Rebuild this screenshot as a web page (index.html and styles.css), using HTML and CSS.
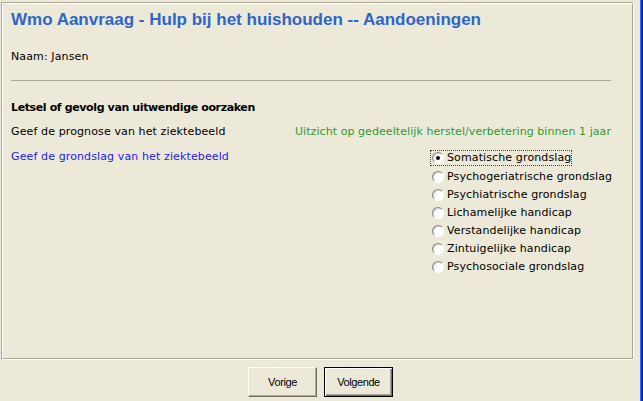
FILE: index.html
```html
<!DOCTYPE html>
<html lang="nl">
<head>
<meta charset="utf-8">
<title>Wmo Aanvraag</title>
<link rel="stylesheet" href="styles.css">
</head>
<body>
<div class="window">
  <div class="main">
    <div class="panel">
      <div class="panel-inner">
        <h1 class="title">Wmo Aanvraag - Hulp bij het huishouden -- Aandoeningen</h1>
        <div class="name">Naam: Jansen</div>
        <div class="rule"></div>
        <div class="section">Letsel of gevolg van uitwendige oorzaken</div>
        <div class="row">
          <span class="label">Geef de prognose van het ziektebeeld</span>
          <span class="answer">Uitzicht op gedeeltelijk herstel/verbetering binnen 1 jaar</span>
        </div>
        <div class="row row-radio">
          <span class="label label-active">Geef de grondslag van het ziektebeeld</span>
          <div class="radios">
            <label class="radio focused"><span class="dot checked"></span><span class="rtext">Somatische grondslag</span></label>
            <label class="radio"><span class="dot"></span><span class="rtext">Psychogeriatrische grondslag</span></label>
            <label class="radio"><span class="dot"></span><span class="rtext">Psychiatrische grondslag</span></label>
            <label class="radio"><span class="dot"></span><span class="rtext">Lichamelijke handicap</span></label>
            <label class="radio"><span class="dot"></span><span class="rtext">Verstandelijke handicap</span></label>
            <label class="radio"><span class="dot"></span><span class="rtext">Zintuigelijke handicap</span></label>
            <label class="radio"><span class="dot"></span><span class="rtext">Psychosociale grondslag</span></label>
          </div>
        </div>
      </div>
    </div>
    <div class="buttons">
      <button class="btn">Vorige</button>
      <button class="btn btn-default">Volgende</button>
    </div>
  </div>
  <div class="edge"></div>
</div>
</body>
</html>
```
FILE: styles.css
```css
html, body {
  margin: 0;
  padding: 0;
}
body {
  width: 643px;
  height: 401px;
  overflow: hidden;
  background: #ECE9D8;
  font-family: "DejaVu Sans", Verdana, sans-serif;
  font-size: 11px;
  letter-spacing: 0.12px;
  color: #000;
}
.window {
  display: flex;
  width: 643px;
  height: 401px;
}
.main {
  width: 640px;
  display: flex;
  flex-direction: column;
}
.edge {
  width: 3px;
  height: 401px;
  background: linear-gradient(to right, #3d6fe6 0, #3d6fe6 1px, #0b2fd0 1px, #0a22b8 3px);
}
.panel {
  margin: 2px 0 0 1px;
  width: 631px;
  height: 356px;
  border-top: 1px solid #ACA899;
  border-left: 1px solid #ACA899;
  border-bottom: 1px solid #fff;
  border-right: 1px solid #fff;
}
.panel-inner {
  box-sizing: border-box;
  height: 100%;
  border-top: 1px solid #fff;
  border-left: 1px solid #fff;
  border-bottom: 1px solid #ACA899;
  border-right: 1px solid #ACA899;
  padding: 5px 0 0 8px;
}
.title {
  margin: 0;
  font-family: "Liberation Sans", Arial, sans-serif;
  font-weight: bold;
  font-size: 17px;
  letter-spacing: 0;
  line-height: 22px;
  color: #2d66c8;
}
.name {
  margin-top: 19px;
  line-height: 14px;
}
.rule {
  margin-top: 16px;
  width: 600px;
  height: 1px;
  background: #ACA899;
}
.section {
  margin-top: 20px;
  font-weight: bold;
  letter-spacing: -0.38px;
  line-height: 14px;
}
.row {
  display: flex;
  justify-content: space-between;
  width: 600px;
  margin-top: 10px;
  line-height: 14px;
}
.label {
  white-space: nowrap;
}
.answer {
  color: #2e9a2e;
  letter-spacing: 0.07px;
  white-space: nowrap;
}
.row-radio {
  margin-top: 11px;
  justify-content: flex-start;
}
.row-radio .label {
  flex: 0 0 419px;
}
.label-active {
  color: #1c1cf0;
}
.radios {
  margin-top: 0;
  display: flex;
  flex-direction: column;
}
.radio {
  display: flex;
  align-items: center;
  height: 18px;
  padding-left: 1px;
  box-sizing: border-box;
  border: 1px solid transparent;
}
.radio.focused {
  border: 1px dotted #444;
  width: 142px;
  height: 16px;
  margin-bottom: 2px;
}
.dot {
  position: relative;
  width: 12px;
  height: 12px;
  border-radius: 50%;
  box-sizing: border-box;
  border-top: 1px solid #8a8a8a;
  border-left: 1px solid #8a8a8a;
  border-right: 1px solid #fff;
  border-bottom: 1px solid #fff;
  background: #fff;
  box-shadow: inset 1px 1px 0 #d4d0c8;
  margin-right: 3px;
  flex: none;
}
.dot.checked::after {
  content: "";
  position: absolute;
  left: 3px;
  top: 3px;
  width: 4px;
  height: 4px;
  border-radius: 50%;
  background: #000;
}
.rtext {
  white-space: nowrap;
}
.buttons {
  display: flex;
  justify-content: center;
  gap: 7px;
  margin-top: 7px;
  padding-left: 1px;
}
.btn {
  box-sizing: border-box;
  width: 69px;
  height: 30px;
  padding: 0;
  background: #ECE9D8;
  font-family: "Liberation Sans", Arial, sans-serif;
  font-size: 11px;
  letter-spacing: -0.4px;
  color: #000;
  border-top: 1px solid #fff;
  border-left: 1px solid #fff;
  border-right: 1px solid #716f64;
  border-bottom: 1px solid #716f64;
  box-shadow: inset -1px -1px 0 #ACA899;
}
.btn-default {
  border: 1px solid #000;
  box-shadow: inset 1px 1px 0 #fff, inset -1px -1px 0 #716f64, inset -2px -2px 0 #ACA899;
}
```
